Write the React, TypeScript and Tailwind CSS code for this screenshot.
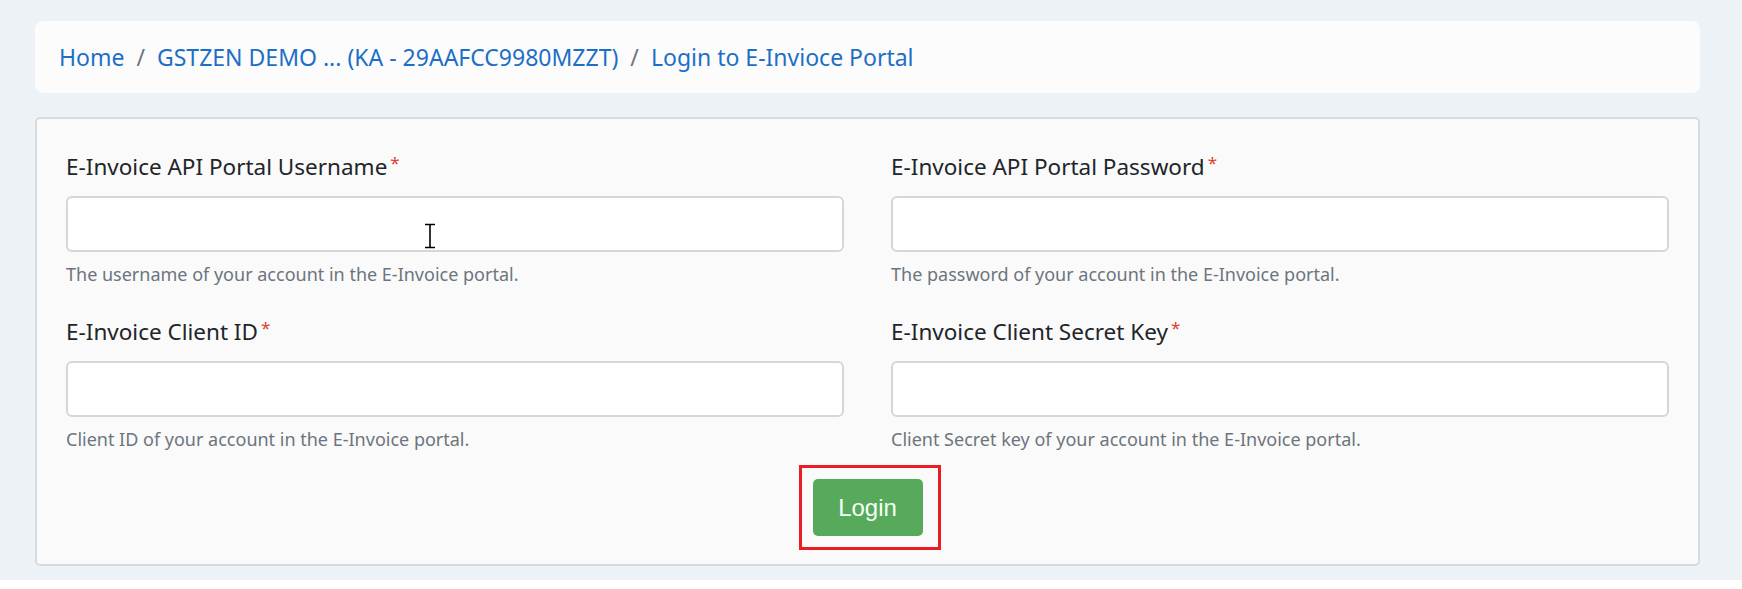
import React from 'react';

const font = { fontFamily: '"Noto Sans", "Open Sans", sans-serif' };

interface FieldProps {
  label: string;
  help: string;
  cursor?: boolean;
  className?: string;
}

function IBeam() {
  return (
    <svg
      className="pointer-events-none absolute left-[357px] top-[27px]"
      width="14"
      height="26"
      viewBox="0 0 14 26"
    >
      <path d="M2 1.5h10M7 1.5v23M2 24.5h10" stroke="#fff" strokeWidth="3.5" fill="none" />
      <path d="M2 1.5h10M7 1.5v23M2 24.5h10" stroke="#000" strokeWidth="1.6" fill="none" />
    </svg>
  );
}

function Field({ label, help, cursor, className }: FieldProps) {
  return (
    <div className={className}>
      <label className="block text-[22.5px] leading-[36px] text-[#212529]">
        {label}
        <span className="relative -top-[6px] ml-[3px] text-[17px] text-[#e0412f]">*</span>
      </label>
      <div className="relative mt-[9px]">
        <input
          type="text"
          className="block h-[56px] w-full rounded-[6px] border-2 border-[#d6d6d6] bg-white px-3 outline-none"
        />
        {cursor ? <IBeam /> : null}
      </div>
      <p className="mt-[8px] text-[18px] leading-[28px] text-[#6c757d]">{help}</p>
    </div>
  );
}

export default function App() {
  return (
    <div className="min-h-[589px] bg-white" style={font}>
      <div className="bg-[#edf2f6] pb-[14px] pl-[35px] pr-[42px] pt-[21px]">
        <nav className="flex h-[72px] items-center rounded-[8px] bg-[#fcfcfc] px-[24px] text-[23px] text-[#1d6fc6]">
          <a href="#">Home</a>
          <span className="px-[12px] text-[#6c757d]">/</span>
          <a href="#">GSTZEN DEMO ... (KA - 29AAFCC9980MZZT)</a>
          <span className="px-[12px] text-[#6c757d]">/</span>
          <a href="#">Login to E-Invioce Portal</a>
        </nav>

        <div className="mt-[24px] rounded-[5px] border-2 border-[#d8dbde] bg-[#fafafa] px-[29px] pb-[28px] pt-[30px]">
          <div className="grid grid-cols-2 gap-x-[47px]">
            <Field
              className="mb-[26px]"
              label="E-Invoice API Portal Username"
              help="The username of your account in the E-Invoice portal."
              cursor
            />
            <Field
              className="mb-[26px]"
              label="E-Invoice API Portal Password"
              help="The password of your account in the E-Invoice portal."
            />
            <Field
              label="E-Invoice Client ID"
              help="Client ID of your account in the E-Invoice portal."
            />
            <Field
              label="E-Invoice Client Secret Key"
              help="Client Secret key of your account in the E-Invoice portal."
            />
          </div>

          <div className="mt-[26px] flex justify-center">
            <div className="relative">
              <button
                type="button"
                className="h-[57px] w-[110px] rounded-[5px] bg-[#57aa5b] text-[24px] text-[#f6fff6]"
                style={{ fontFamily: '"Liberation Sans", Arial, sans-serif' }}
              >
                Login
              </button>
              <span className="pointer-events-none absolute -bottom-[14px] -left-[14px] -right-[18px] -top-[14px] border-[3px] border-[#ec1c24]" />
            </div>
          </div>
        </div>
      </div>
    </div>
  );
}
